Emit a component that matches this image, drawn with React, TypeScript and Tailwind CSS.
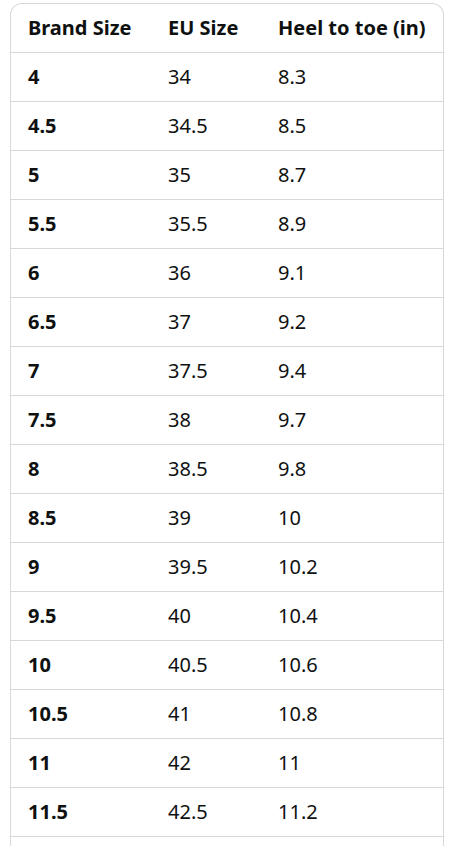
const rows = [
  ["4", "34", "8.3"],
  ["4.5", "34.5", "8.5"],
  ["5", "35", "8.7"],
  ["5.5", "35.5", "8.9"],
  ["6", "36", "9.1"],
  ["6.5", "37", "9.2"],
  ["7", "37.5", "9.4"],
  ["7.5", "38", "9.7"],
  ["8", "38.5", "9.8"],
  ["8.5", "39", "10"],
  ["9", "39.5", "10.2"],
  ["9.5", "40", "10.4"],
  ["10", "40.5", "10.6"],
  ["10.5", "41", "10.8"],
  ["11", "42", "11"],
  ["11.5", "42.5", "11.2"],
];

export default function App() {
  return (
    <div className="min-h-screen bg-white pt-[3px] pl-[10px] pr-[13px] font-['Noto_Sans',sans-serif] text-[#0f1111]">
      <div className="h-[843px] overflow-hidden rounded-t-[12px] border border-b-0 border-[#d5d9d9]">
        <div className="grid h-[48px] grid-cols-[139px_110px_1fr] items-center text-[20px] font-bold">
          <div className="pl-[17px]">Brand Size</div>
          <div className="pl-[18px]">EU Size</div>
          <div className="pl-[18px]">Heel to toe (in)</div>
        </div>
        {rows.map((r, i) => (
          <div
            key={i}
            className="grid h-[49px] grid-cols-[139px_110px_1fr] items-center border-t border-[#d5d9d9] text-[20px]"
          >
            <div className="pl-[17px] font-bold">{r[0]}</div>
            <div className="pl-[18px]">{r[1]}</div>
            <div className="pl-[18px]">{r[2]}</div>
          </div>
        ))}
        <div className="border-t border-[#d5d9d9]" />
      </div>
    </div>
  );
}
